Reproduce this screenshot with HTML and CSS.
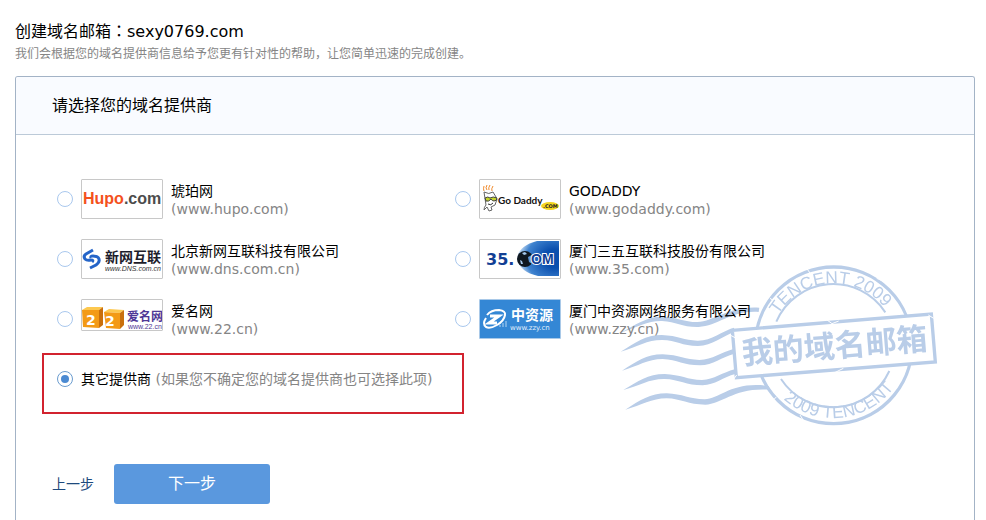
FILE: index.html
```html
<!DOCTYPE html>
<html lang="zh-CN">
<head>
<meta charset="utf-8">
<meta name="viewport" content="width=device-width, initial-scale=1">
<title>创建域名邮箱</title>
<link rel="stylesheet" href="styles.css">
</head>
<body>
<header class="page-head">
  <h1 class="page-title">创建域名邮箱<span class="colon" lang="zh-TW">：</span>sexy0769.com</h1>
  <p class="page-note">我们会根据您的域名提供商信息给予您更有针对性的帮助，让您简单迅速的完成创建。</p>
</header>

<main class="card">
  <svg class="stamp" viewBox="30 15 960 510" aria-hidden="true">
    <defs>
      <filter id="rough" x="-5%" y="-5%" width="110%" height="110%">
        <feTurbulence type="fractalNoise" baseFrequency="0.3" numOctaves="2" seed="4" result="n"/>
        <feDisplacementMap in="SourceGraphic" in2="n" scale="2"/>
      </filter>
      <path id="arc-top" d="M476 280A195 195 0 1 1 866 280"/>
      <path id="arc-bottom" d="M444 262A227 227 0 1 0 898 262"/>
    </defs>
    <g filter="url(#rough)">
      <g fill="#b9cde8">
        <path d="M32 233C80 208 110 184 158 185C205 187 220 201 262 201C315 199 355 152 448 158L446 171C365 165 325 213 266 216C215 217 200 200 156 198C112 197 85 216 32 233Z"/>
        <path d="M32 290C80 262 105 240 155 240C205 242 222 256 262 257C305 258 335 228 372 218L374 231C335 244 308 272 264 273C215 273 200 256 156 255C110 255 85 275 32 290Z"/>
        <path d="M36 347C80 320 108 298 158 298C208 300 226 314 268 315C308 314 334 292 370 282L373 296C335 306 310 330 270 331C220 331 203 314 158 312C112 312 86 333 36 347Z"/>
        <path d="M40 405C86 378 112 357 164 357C212 359 232 374 276 375C312 374 338 352 374 343L376 357C340 366 314 390 278 391C228 391 208 373 164 372C118 371 90 392 40 405Z"/>
        <path d="M46 464C90 436 120 415 170 415C218 417 238 432 284 433C332 431 365 378 476 393L480 404C375 396 338 446 286 449C234 449 214 431 170 430C124 430 96 451 46 464Z"/>
      </g>
      <g fill="none" stroke="#b9cde8">
        <circle cx="671" cy="271" r="235" stroke-width="10"/>
        <path d="M499 200A186 186 0 0 1 826 172M513 372A186 186 0 0 0 838 348" stroke-width="6"/>
      </g>
      <path d="M367 226L964 177L976 321L379 368Z" fill="#fff" stroke="#b9cde8" stroke-width="10"/>
      <path d="M360 240l15 8M380 360l-10 14M650 194l16 12 20-8M700 340l-30 15M955 180l16 10M480 130l18 12M500 425l-12 12M570 480l14 22M800 70l18 8M590 40l10 14" stroke="#fff" stroke-width="3" fill="none"/>
      <g fill="#b9cde8">
        <text class="stamp-ring" transform="rotate(-4 671 271)"><textPath href="#arc-top" startOffset="50%" text-anchor="middle">TENCENT 2009</textPath></text>
        <text class="stamp-ring" transform="rotate(-6 671 271)"><textPath href="#arc-bottom" startOffset="50%" text-anchor="middle">2009 TENCENT</textPath></text>
        <text class="stamp-name" x="674" y="306" text-anchor="middle" transform="rotate(-4.6 672 273)">我的域名邮箱</text>
      </g>
    </g>
  </svg>

  <h2 class="card-title">请选择您的域名提供商</h2>

  <form class="card-body">
    <div class="providers">
      <label class="provider">
        <input class="radio" type="radio" name="provider" value="hupo">
        <svg class="logo" viewBox="0 0 80 38" aria-hidden="true">
          <text class="lg-hupo" x="1" y="24" fill="#f4511c">Hupo<tspan fill="#4c4c4c">.com</tspan></text>
        </svg>
        <span class="info"><span class="name">琥珀网</span><span class="url">(www.hupo.com)</span></span>
      </label>

      <label class="provider">
        <input class="radio" type="radio" name="provider" value="godaddy">
        <svg class="logo" viewBox="0 0 80 38" aria-hidden="true">
          <path d="M4 11Q3 9 4 6M7 10Q5 8 7 5M9 10Q8 8 10 5M12 11Q11 9 13 6" fill="none" stroke="#f08a2c" stroke-width="1"/>
          <path d="M4 12L6 25Q4 27 4 30L7 27L9 31L12 30L11 27L15 25L16 22Q18 20 16 17L13 12Q9 15 4 12Z" fill="#fff" stroke="#666" stroke-width="1"/>
          <path d="M5 18Q8 16 10 18Q13 16 17 18Q17 21 14 21Q12 21 11 19Q9 22 6 21Z" fill="#c4d32b" stroke="#444" stroke-width="1"/>
          <path d="M8 24Q11 26 13 23" fill="none" stroke="#333" stroke-width="1"/>
          <text class="lg-daddy" x="18" y="24" fill="#111">Go Daddy</text>
          <ellipse cx="70" cy="26" rx="9" ry="4" fill="#f3d51f"/>
          <text class="lg-com" x="63" y="28" fill="#222">.COM</text>
        </svg>
        <span class="info"><span class="name">GODADDY</span><span class="url">(www.godaddy.com)</span></span>
      </label>

      <label class="provider">
        <input class="radio" type="radio" name="provider" value="dns">
        <svg class="logo" viewBox="0 0 80 38" aria-hidden="true">
          <path d="M11 10L4 14Q1 16 3 19Q5 21 9 20Q12 20 10 22" fill="none" stroke="#2464c8" stroke-width="3"/>
          <path d="M9 18Q8 16 11 16Q16 16 17 19Q18 22 14 25L8 28" fill="none" stroke="#2464c8" stroke-width="3"/>
          <text class="lg-cn lg-cn-14" x="23" y="22" fill="#1d1d2b">新网互联</text>
          <text class="lg-small lg-italic" x="23" y="31" fill="#333">www.DNS.com.cn</text>
        </svg>
        <span class="info"><span class="name">北京新网互联科技有限公司</span><span class="url">(www.dns.com.cn)</span></span>
      </label>

      <label class="provider">
        <input class="radio" type="radio" name="provider" value="35">
        <svg class="logo" viewBox="0 0 80 38" aria-hidden="true">
          <defs>
            <radialGradient id="globe-blue" cx="0.9" cy="0.5" r="0.9">
              <stop offset="0.3" stop-color="#0b4fae"/>
              <stop offset="0.75" stop-color="#3f83cf"/>
              <stop offset="1" stop-color="#d5e6f7"/>
            </radialGradient>
          </defs>
          <path d="M79 1H57Q38 6 37 19Q40 32 58 36H79Z" fill="url(#globe-blue)"/>
          <text class="lg-wide" x="6" y="25" fill="#123f94">35.</text>
          <circle cx="45" cy="19" r="8" fill="#101820"/>
          <path d="M54 14l-6 3 1 5 5 3z" fill="#5d97d6"/>
          <path d="M42 13l3-1 2 2-3 1zM40 20l2 1 1 3-2 0z" fill="#a7c9ec"/>
          <text class="lg-om" x="51" y="24" fill="#123f94" stroke="#fff" stroke-width="2" paint-order="stroke">OM</text>
        </svg>
        <span class="info"><span class="name">厦门三五互联科技股份有限公司</span><span class="url">(www.35.com)</span></span>
      </label>

      <label class="provider">
        <input class="radio" type="radio" name="provider" value="22">
        <svg class="logo logo-short" viewBox="0 0 80 30" aria-hidden="true">
          <path d="M0 10L5 7L21 7L17 10Z" fill="#fdc84f"/>
          <path d="M0 10L17 10V28L1 27Z" fill="#f39a16"/>
          <path d="M17 10L21 7V25L17 28Z" fill="#c96f0c"/>
          <path d="M22 12L27 9L42 10L38 13Z" fill="#fdc84f"/>
          <path d="M22 12L38 13V29L24 28Z" fill="#f39a16"/>
          <path d="M38 13L42 10V25L38 29Z" fill="#c96f0c"/>
          <text class="lg-digit" x="4" y="25" fill="#fff">2</text>
          <text class="lg-digit" x="23" y="26" fill="#fff">2</text>
          <text class="lg-cn lg-cn-12" x="45" y="21" fill="#4f3796">爱名网</text>
          <text class="lg-small" x="46" y="29" fill="#4f3796">www.22.cn</text>
        </svg>
        <span class="info"><span class="name">爱名网</span><span class="url">(www.22.cn)</span></span>
      </label>

      <label class="provider">
        <input class="radio" type="radio" name="provider" value="zzy">
        <svg class="logo logo-blue" viewBox="0 0 80 38" aria-hidden="true">
          <path d="M7 15Q11 10 19 10Q26 11 25 15Q24 21 17 25Q10 29 6 27Q2 24 6 18" fill="none" stroke="#fff" stroke-width="2"/>
          <path d="M10 16H19L9 23H17" fill="none" stroke="#fff" stroke-width="3"/>
          <path d="M20 27v-2M23 27v-4M26 27v-6" stroke="#b5d5f2" stroke-width="1"/>
          <text class="lg-cn lg-cn-14" x="31" y="20" fill="#fff">中资源</text>
          <text class="lg-small lg-open" x="30" y="30" fill="#e2f0fc">www.zzy.cn</text>
        </svg>
        <span class="info"><span class="name">厦门中资源网络服务有限公司</span><span class="url">(www.zzy.cn)</span></span>
      </label>
    </div>

    <label class="other">
      <input class="radio" type="radio" name="provider" value="other" checked>
      <span>其它提供商 <span class="hint">(如果您不确定您的域名提供商也可选择此项)</span></span>
    </label>

    <div class="actions">
      <a class="prev" href="#">上一步</a>
      <button class="next" type="button">下一步</button>
    </div>
  </form>
</main>
</body>
</html>
```

FILE: styles.css
```css
* {
  box-sizing: border-box;
}

html {
  overflow-x: hidden;
  scrollbar-width: none;
}

body {
  margin: 0;
  padding: 18px 11px 0 15px;
  background: #fff;
  color: #000;
  font: 14px/18px "DejaVu Sans", "Noto Sans CJK SC", sans-serif;
}

.page-title {
  margin: 0;
  font-size: 16px;
  font-weight: 400;
  line-height: 24px;
}

.colon {
  font-family: "Noto Sans CJK TC", sans-serif;
}

.page-note {
  margin: 0 0 14px;
  color: #858585;
  font-family: "Noto Sans CJK SC", sans-serif;
  font-size: 12px;
  line-height: 18px;
}

.card {
  position: relative;
  border: 1px solid #a3b3c6;
  border-bottom: 0;
  border-radius: 3px 3px 0 0;
  background: #fff;
}

.card-title {
  margin: 0;
  padding: 17px 36px 16px;
  border-bottom: 1px solid #bccad8;
  border-radius: 2px 2px 0 0;
  background: #f9fbff;
  font-size: 16px;
  font-weight: 400;
  line-height: 24px;
}

.card-body {
  position: relative;
  padding: 44px 26px 16px;
}

.stamp {
  position: absolute;
  top: 183px;
  right: 34px;
  width: 320px;
  height: 170px;
}

.stamp-ring {
  font: 52px "Liberation Sans", sans-serif;
}

.stamp-name {
  font: 700 93px "Noto Sans CJK SC", sans-serif;
}

.providers {
  display: grid;
  grid-template-columns: 1fr 1fr;
  row-gap: 20px;
  margin: 0 95px 0 15px;
}

.provider {
  display: flex;
  align-items: flex-start;
  gap: 8px;
  height: 40px;
}

.provider .radio {
  margin-top: 12px;
}

.radio {
  flex: none;
  display: grid;
  place-items: center;
  appearance: none;
  width: 16px;
  height: 16px;
  margin: 0;
  border: 1px solid #a9c8ee;
  border-radius: 50%;
  background: #fff;
}

.radio:checked {
  border-color: #6a9ccf;
}

.radio:checked::before {
  content: "";
  width: 8px;
  height: 8px;
  border-radius: 50%;
  background: #4b8ad2;
}

.logo {
  flex: none;
  width: 82px;
  height: 40px;
  border: 1px solid #c8c8c8;
  border-radius: 1px;
}

.logo-short {
  height: 32px;
}

.logo-blue {
  border-color: #a9c9e8;
  background: #3487d5;
}

.lg-hupo {
  font: bold 16px "Liberation Sans", sans-serif;
}

.lg-daddy {
  font: bold 10px Lato, sans-serif;
}

.lg-com {
  font: bold 5px "DejaVu Sans", sans-serif;
}

.lg-wide {
  font: bold 16px "DejaVu Sans", sans-serif;
}

.lg-om {
  font: bold 14px "Liberation Sans", sans-serif;
}

.lg-digit {
  font: bold 14px "DejaVu Sans", sans-serif;
}

.lg-cn {
  font-family: "Noto Sans CJK SC", sans-serif;
  font-weight: 700;
}

.lg-cn-14 {
  font-size: 14px;
}

.lg-cn-12 {
  font-size: 12px;
}

.lg-small {
  font: 7px "Liberation Sans", sans-serif;
}

.lg-italic {
  font-style: italic;
}

.lg-open {
  font-family: "DejaVu Sans", sans-serif;
}

.info {
  display: flex;
  flex-direction: column;
  padding-top: 3px;
  white-space: nowrap;
}

.url,
.hint {
  color: #858585;
}

.other {
  display: flex;
  align-items: center;
  gap: 8px;
  width: fit-content;
  margin-top: 14px;
  padding: 15px 30px 24px 13px;
  border: 2px solid #d2232f;
}

.actions {
  display: flex;
  align-items: center;
  gap: 20px;
  margin: 50px 0 0 10px;
}

.prev {
  color: #1e4a7d;
  text-decoration: none;
}

.next {
  width: 156px;
  height: 40px;
  border: 0;
  border-radius: 3px;
  background: #5a98de;
  color: #fff;
  font: 16px/24px "DejaVu Sans", "Noto Sans CJK SC", sans-serif;
}
```
